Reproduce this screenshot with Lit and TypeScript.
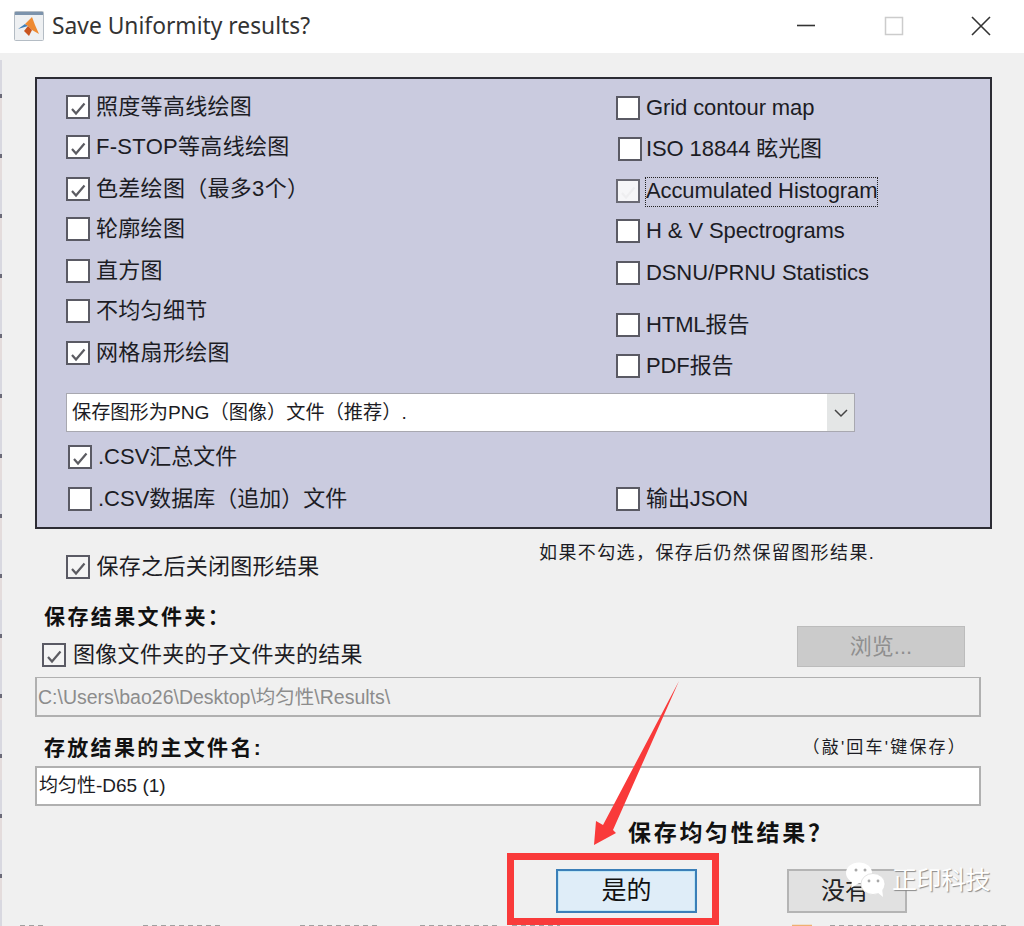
import { LitElement, html, css, svg } from "lit";
import { customElement } from "lit/decorators.js";

type Row = { label: string; checked?: boolean; gap: number; shift?: number; focus?: boolean; faint?: boolean };

const LEFT: Row[] = [
  { label: "照度等高线绘图", checked: true, gap: 0 },
  { label: "F-STOP等高线绘图", checked: true, gap: 16 },
  { label: "色差绘图（最多3个）", checked: true, gap: 18 },
  { label: "轮廓绘图", gap: 16 },
  { label: "直方图", gap: 18 },
  { label: "不均匀细节", gap: 16 },
  { label: "网格扇形绘图", checked: true, gap: 18 },
];
const RIGHT: Row[] = [
  { label: "Grid contour map", gap: 1 },
  { label: "ISO 18844 眩光图", gap: 17, shift: 2 },
  { label: "Accumulated Histogram", gap: 18, focus: true, faint: true },
  { label: "H & V Spectrograms", gap: 16 },
  { label: "DSNU/PRNU Statistics", gap: 18 },
  { label: "HTML报告", gap: 28 },
  { label: "PDF报告", gap: 17 },
];

const tick = svg`<path d="M4 12 L8 16.5 L16.5 6.5" fill="none" stroke="currentColor" stroke-width="2.2"/>`;

@customElement("app-root")
export class AppRoot extends LitElement {
  static styles = css`
    :host {
      display: block;
      width: 1024px;
      height: 926px;
      position: relative;
      overflow: hidden;
      background: #f0f0f0;
      color: #1c1c24;
      font-family: "Liberation Sans", "Noto Sans CJK SC", sans-serif;
      font-size: 22px;
      line-height: 24px;
    }
    .title {
      height: 53px;
      box-sizing: border-box;
      background: #fff;
      display: flex;
      align-items: center;
      padding: 0 0 2px 14px;
      font-family: "Noto Sans", "Noto Sans CJK SC", sans-serif;
      font-size: 22.8px;
      color: #333;
    }
    .title .app { width: 30px; height: 30px; margin-right: 8px; flex: none; }
    .title .name { flex: 1; }
    .win { width: 88px; height: 30px; display: flex; align-items: center; justify-content: center; flex: none; }
    .win.close { width: 86px; }
    .win svg { width: 20px; height: 20px; }
    .body { padding: 24px 32px 0 35px; display: flex; flex-direction: column; }
    .panel {
      width: 957px;
      height: 452px;
      box-sizing: border-box;
      border: 2px solid #2c2c34;
      background: #cacbdf;
      padding: 16px 0 0 29px;
    }
    .cols { display: flex; height: 298px; }
    .col { display: flex; flex-direction: column; }
    .col.l { width: 550px; }
    .row { display: flex; align-items: center; height: 24px; gap: 6.5px; white-space: nowrap; letter-spacing: 0.3px; }
    .col.narrow .row { letter-spacing: -0.1px; }
    .box {
      width: 24px;
      height: 24px;
      box-sizing: border-box;
      border: 2px solid #5a5a64;
      background: #fff;
      color: #5c5c62;
      flex: none;
    }
    .box svg { display: block; width: 20px; height: 20px; }
    .box.plain { background: #f4f4f4; }
    .box.faint { background: #f6f6f8; color: #eeeef0; border-color: #6a6a74; }
    .focus { outline: 1px dotted #222; outline-offset: 0; height: 28px; line-height: 25px; margin-top: 1px; }
    .combo {
      width: 789px;
      height: 39px;
      box-sizing: border-box;
      border: 1px solid #a8a8b0;
      background: #fff;
      display: flex;
      align-items: center;
      padding-left: 5px;
      font-size: 19.2px;
    }
    .combo .val { flex: 1; }
    .combo .arrow {
      width: 27px;
      height: 100%;
      background: #e4e6e6;
      display: flex;
      align-items: center;
      justify-content: center;
    }
    .bottom { display: flex; margin-top: 13px; margin-left: 2px; }
    .bottom .col.l { width: 548px; gap: 18px; }
    .bottom .col.l .row { letter-spacing: 0; }
    .bottom .col.narrow { padding-top: 42px; }
    .after {
      display: flex;
      margin-top: 26px;
      padding-left: 31px;
      height: 28px;
      align-items: flex-start;
    }
    .after .row { width: 473px; }
    .hint { font-size: 18px; letter-spacing: 1.4px; line-height: 20px; margin-top: -12px; white-space: nowrap; }
    .section { display: flex; flex-direction: column; }
    .bold { font-weight: 700; font-size: 21px; letter-spacing: 2.4px; margin: 22px 0 0 9px; color: #111; }
    .folder { display: flex; justify-content: space-between; align-items: flex-end; margin: 14px 0 0 7px; height: 24px; width: 923px; }
    .folder .row { gap: 7px; }
    .browse {
      width: 168px;
      height: 41px;
      flex: none;
      box-sizing: border-box;
      background: #cbcbcb;
      border: 1px solid #bcbcbc;
      color: #8f8f8f;
      text-align: center;
      line-height: 39px;
    }
    .path {
      width: 946px;
      height: 40px;
      box-sizing: border-box;
      margin-top: 10px;
      border: 2px solid #b0b0b0;
      border-top-width: 1px;
      padding-left: 1px;
      font-size: 19.5px;
      line-height: 38px;
      color: #8c8c8c;
    }
    .name-head { display: flex; justify-content: space-between; width: 946px; margin-top: 19px; }
    .name-head .bold { margin: 0 0 0 9px; letter-spacing: 2.3px; }
    .name-head .note { font-size: 17px; line-height: 24px; margin-right: 14px; letter-spacing: 2.2px; white-space: nowrap; }
    .file {
      width: 946px;
      height: 40px;
      box-sizing: border-box;
      margin-top: 6px;
      border: 2px solid #b0b0b0;
      background: #fff;
      padding-left: 2px;
      font-size: 19px;
      line-height: 36px;
    }
    .ask { font-weight: 700; font-size: 23px; letter-spacing: 2.7px; margin: 12px 0 0 593px; height: 30px; line-height: 30px; color: #111; white-space: nowrap; }
    .actions { display: flex; gap: 90px; margin: 21px 0 0 521px; }
    .yes {
      width: 141px;
      height: 44px;
      box-sizing: border-box;
      border: 2px solid #3b7fb8;
      background: #dfedf8;
      box-shadow: inset 0 0 0 1px #bfe6f6;
      text-align: center;
      font-size: 25px;
      line-height: 38px;
      color: #111;
    }
    .no {
      width: 120px;
      height: 44px;
      box-sizing: border-box;
      border: 2px solid #b4b4b4;
      background: #e1e1e1;
      text-align: center;
      font-size: 24px;
      line-height: 40px;
      padding-right: 4px;
      color: #222;
    }
    .overlay { position: absolute; left: 0; top: 0; width: 1024px; height: 926px; pointer-events: none; }
    .mark {
      position: absolute;
      left: 892px;
      top: 864px;
      font-size: 25px;
      line-height: 32px;
      color: #fff;
      letter-spacing: -0.5px;
      text-shadow: 1px 1px 1px #8a8a8a;
    }
    .edge {
      position: absolute;
      left: 0;
      top: 60px;
      width: 2px;
      height: 866px;
      background: repeating-linear-gradient(#d8d8e0 0 34px, #6a6a78 34px 38px, #e4dcdc 38px 60px);
    }
  `;

  private box(checked?: boolean, kind = "") {
    return html`<span class="box ${kind}">
      ${checked ? html`<svg viewBox="0 0 20 20">${tick}</svg>` : ""}
    </span>`;
  }

  private row(r: Row) {
    return html`<div class="row" style="margin-top:${r.gap}px;margin-left:${r.shift ?? 0}px;gap:${r.shift ? 4 : 6}px">
      ${this.box(r.checked || r.faint, r.faint ? "faint" : "")}<span class=${r.focus ? "focus" : ""}>${r.label}</span>
    </div>`;
  }

  render() {
    return html`
      <div class="title">
        <svg class="app" viewBox="0 0 30 30">
          <rect x="0.5" y="0.5" width="29" height="29" rx="1" fill="#eef0f2" stroke="#b4bcc4"/>
          <rect x="1" y="1" width="28" height="3" fill="#7c93ac"/>
          <path d="M4 18 L11 13 L14 15 Z" fill="#3f7fb8"/>
          <path d="M11 13 L18 6 L21 14 L25 23 L18 19 L14 15 Z" fill="#ee8a32"/>
          <path d="M14 15 L18 19 L15 25 L10 20 Z" fill="#c9541e"/>
        </svg>
        <span class="name">Save Uniformity results?</span>
        <span class="win"><svg viewBox="0 0 20 20"><path d="M1 9.5 H19" stroke="#333" stroke-width="1.6"/></svg></span>
        <span class="win"><svg viewBox="0 0 20 20"><rect x="1.5" y="1.5" width="17" height="17" fill="none" stroke="#ccc" stroke-width="1.5"/></svg></span>
        <span class="win close"><svg viewBox="0 0 20 20"><path d="M1 1 L19 19 M19 1 L1 19" stroke="#333" stroke-width="1.6"/></svg></span>
      </div>
      <div class="body">
        <div class="panel">
          <div class="cols">
            <div class="col l">${LEFT.map((r) => this.row(r))}</div>
            <div class="col narrow">${RIGHT.map((r) => this.row(r))}</div>
          </div>
          <div class="combo">
            <span class="val">保存图形为PNG（图像）文件（推荐）.</span>
            <span class="arrow"><svg width="16" height="10" viewBox="0 0 16 10"><path d="M2 2 L8 8 L14 2" fill="none" stroke="#444" stroke-width="1.5"/></svg></span>
          </div>
          <div class="bottom">
            <div class="col l">
              ${this.row({ label: ".CSV汇总文件", checked: true, gap: 0 })}
              ${this.row({ label: ".CSV数据库（追加）文件", gap: 0 })}
            </div>
            <div class="col narrow">${this.row({ label: "输出JSON", gap: 0 })}</div>
          </div>
        </div>
        <div class="after">
          <div class="row">${this.box(true, "plain")}<span>保存之后关闭图形结果</span></div>
          <span class="hint">如果不勾选，保存后仍然保留图形结果.</span>
        </div>
        <div class="section">
          <div class="bold">保存结果文件夹：</div>
          <div class="folder">
            <div class="row">${this.box(true, "plain")}<span>图像文件夹的子文件夹的结果</span></div>
            <div class="browse">浏览...</div>
          </div>
          <div class="path">C:\\Users\\bao26\\Desktop\\均匀性\\Results\\</div>
          <div class="name-head">
            <span class="bold">存放结果的主文件名:</span>
            <span class="note">（敲'回车'键保存）</span>
          </div>
          <div class="file">均匀性-D65 (1)</div>
          <div class="ask">保存均匀性结果？</div>
          <div class="actions">
            <div class="yes">是的</div>
            <div class="no">没有</div>
          </div>
        </div>
      </div>
      <div class="edge"></div>
      <svg class="overlay" viewBox="0 0 1024 926">
        <rect x="510.5" y="856.5" width="205" height="65" fill="none" stroke="#f93a3a" stroke-width="7"/>
        <path d="M679 681 L613 830 L616 833 L594 845 L596 821 L603 825 Z" fill="#f93a3a"/>
        <g fill="#fff">
          <ellipse cx="859" cy="873" rx="13" ry="10.5"/>
          <path d="M852 880 L851 888 L859 883 Z"/>
        </g>
        <g fill="#fff" stroke="#dcdcdc" stroke-width="0.8">
          <ellipse cx="873" cy="884" rx="12" ry="10.5"/>
        </g>
        <path d="M877 892 L883 897 L882 888 Z" fill="#fff"/>
        <g fill="#a8a8a8">
          <circle cx="856" cy="870" r="1.5"/><circle cx="865" cy="870" r="1.5"/>
          <circle cx="869" cy="881" r="1.4"/><circle cx="878" cy="881" r="1.4"/>
        </g>
        <g stroke="#a0a0a0" stroke-width="1" stroke-dasharray="5 4" fill="none">
          <path d="M20 925.5 H45 M143 925.5 H220 M300 925.5 H380 M420 925.5 H500 M512 925.5 H560 M830 925.5 H1010"/>
        </g>
        <path d="M792 925.5 H812" stroke="#f0b070" stroke-width="1.5"/>
      </svg>
      <div class="mark">正印科技</div>
    `;
  }
}
